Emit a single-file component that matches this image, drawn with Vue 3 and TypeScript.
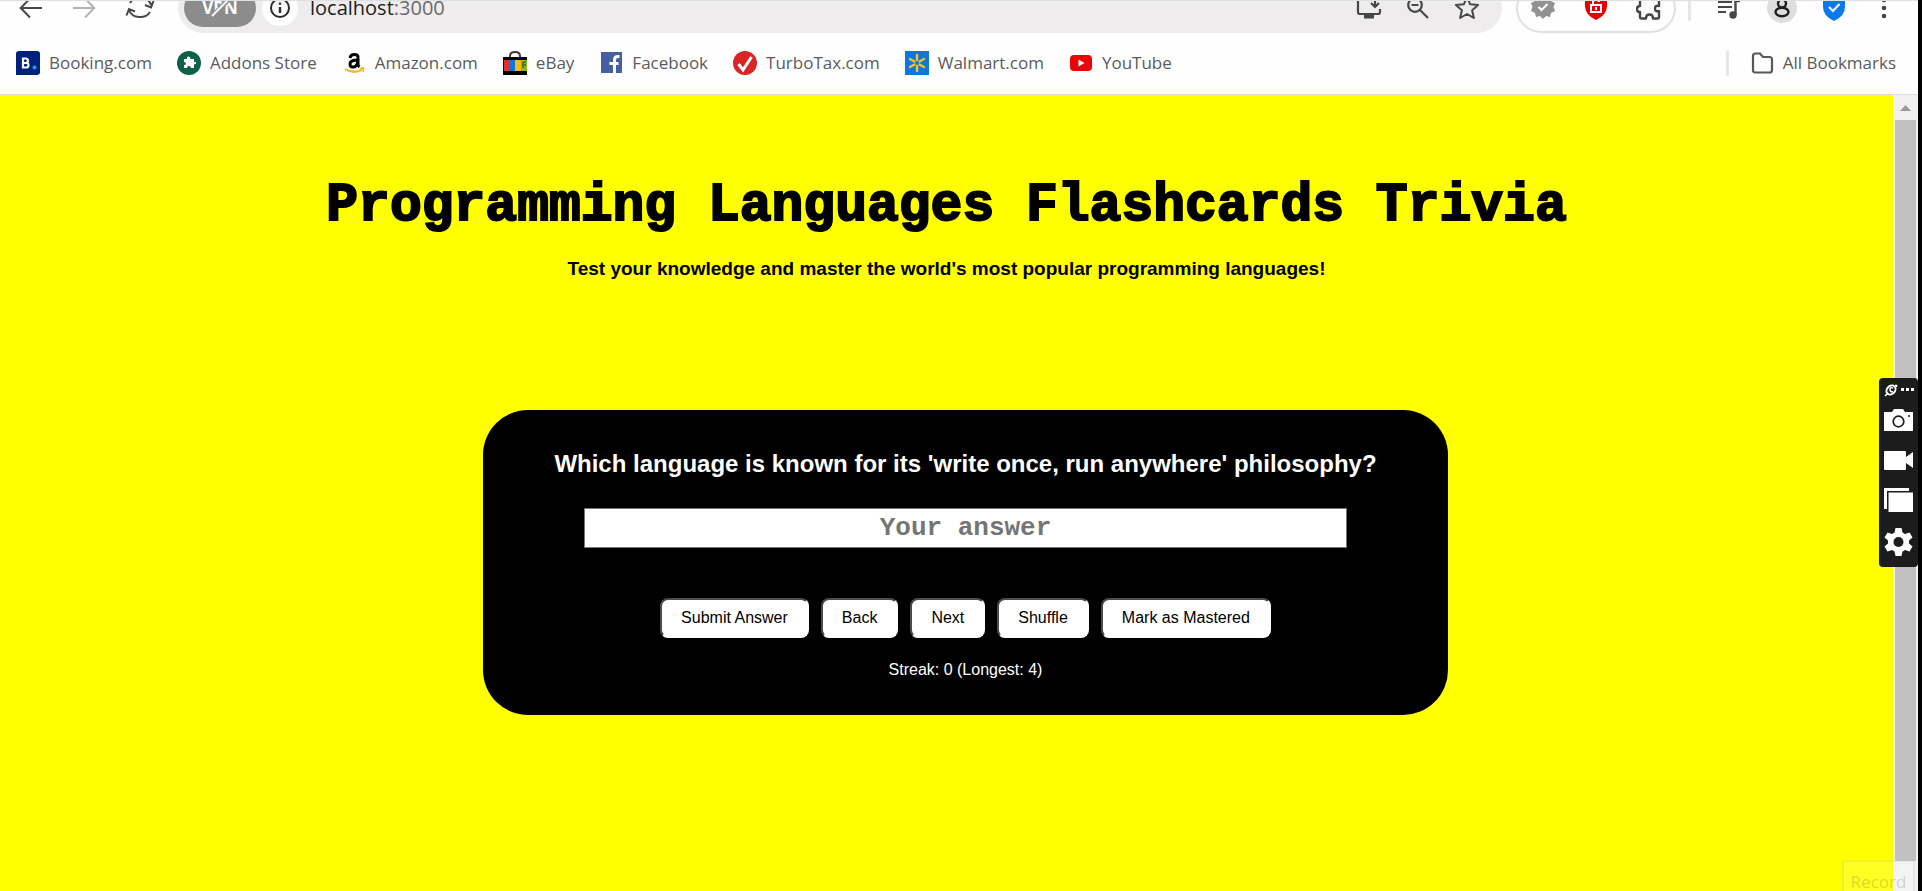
<script setup lang="ts">
import { ref } from 'vue'

interface Bookmark {
  id: string
  label: string
}

const bookmarks: Bookmark[] = [
  { id: 'booking', label: 'Booking.com' },
  { id: 'addons', label: 'Addons Store' },
  { id: 'amazon', label: 'Amazon.com' },
  { id: 'ebay', label: 'eBay' },
  { id: 'facebook', label: 'Facebook' },
  { id: 'turbotax', label: 'TurboTax.com' },
  { id: 'walmart', label: 'Walmart.com' },
  { id: 'youtube', label: 'YouTube' },
]

const actions: string[] = ['Submit Answer', 'Back', 'Next', 'Shuffle', 'Mark as Mastered']
const answer = ref('')
const streak = ref(0)
const longest = ref(4)
</script>

<template>
  <div class="browser">
    <header class="chrome">
      <div class="toolbar">
        <nav class="nav-buttons" aria-label="Navigation">
          <button type="button" aria-label="Back">
            <svg width="24" height="24" viewBox="0 0 24 24" fill="none" stroke="#474747" stroke-width="2"><path d="M23 12H2M11 2.500L1.700 12L11 21.500" /></svg>
          </button>
          <button type="button" aria-label="Forward">
            <svg width="24" height="24" viewBox="0 0 24 24" fill="none" stroke="#b3b3b3" stroke-width="2"><path d="M1 12H22M13 2.500L22.300 12L13 21.500" /></svg>
          </button>
          <button type="button" aria-label="Reload">
            <svg width="30" height="24" viewBox="0 0 30 24" fill="none" stroke="#474747" stroke-width="2"><path d="M4 14a11.500 10 0 0 0 21 2M1.500 19.500L4 13l6 2.500M26 9a11.500 11.500 0 0 0-21-2M28.500 5L26 11.500l-6-2.500" /></svg>
          </button>
        </nav>
        <div class="address">
          <span class="vpn">VPN
            <svg class="slash" width="30" height="24" viewBox="0 0 30 24"><path d="M6 22L24 3" stroke="#8c8c8c" stroke-width="5" /><path d="M7 20L23 4" stroke="#fff" stroke-width="2" /></svg>
          </span>
          <button type="button" class="info" aria-label="Site information">
            <svg width="22" height="22" viewBox="0 0 22 22" fill="none" stroke="#2a2a2a" stroke-width="2"><circle cx="11" cy="11" r="9" /><path d="M11 10v6M11 5.500v2.300" stroke-width="2.400" /></svg>
          </button>
          <span class="url">localhost<span class="port">:3000</span></span>
          <div class="address-icons">
            <svg width="26" height="24" viewBox="0 0 26 24" fill="none" stroke="#474747" stroke-width="2.200"><path d="M13 2H4Q2 2 2 4v12q0 2 2 2h18q2 0 2-2v-3M19 1v9M15 7l4 4 4-4" /><path d="M8 20.500h10" stroke-width="4" /></svg>
            <svg width="24" height="24" viewBox="0 0 24 24" fill="none" stroke="#474747" stroke-width="2.200"><circle cx="9" cy="9" r="6.800" /><path d="M14 14l8 8M5.500 9h7" /></svg>
            <svg width="26" height="26" viewBox="0 0 26 26" fill="none" stroke="#474747" stroke-width="2" stroke-linejoin="round"><path d="M13 2l3.200 7.300 7.900.700-6 5.200 1.800 7.800L13 19l-6.900 4 1.800-7.800-6-5.200 7.900-.700z" /></svg>
          </div>
        </div>
        <div class="extensions">
          <svg width="26" height="26" viewBox="0 0 26 26"><path d="M13 1l3 3 4-1 1 4 4 2-1.500 4 1.500 4-4 2-1 4-4-1-3 3-3-3-4 1-1-4-4-2 1.500-4L1 9l4-2 1-4 4 1z" fill="#929292" /><path d="M8.500 13l3 3 6-6" fill="none" stroke="#fff" stroke-width="2" /></svg>
          <svg width="22" height="26" viewBox="0 0 22 26"><path d="M0 3Q7 3 11 0q4 3 11 3v9q0 9-11 14Q0 21 0 12z" fill="#e60000" /><path d="M6 11h10v7H6zM8 11V8q0-2 3-2t3 2" fill="none" stroke="#fff" stroke-width="2" /><path d="M11 13v3" stroke="#fff" stroke-width="2" /></svg>
          <svg width="26" height="26" viewBox="0 0 26 26" fill="none" stroke="#474747" stroke-width="2.400" stroke-linejoin="round"><path d="M4 5h5q-1-4 3.500-4T16 5h6q1 0 1 1v6q-4-1-4 2.500t4 2.500v6q0 1.500-1.500 1.500H17q0-4-3.500-4T10 24.500H5.500Q4 24.500 4 23v-5q-3 0-3-3t3-3z" /></svg>
        </div>
        <span class="divider"></span>
        <div class="tools">
          <svg width="24" height="24" viewBox="0 0 24 24"><path d="M1 6h14M1 11h14M1 16h8" stroke="#474747" stroke-width="2.200" /><circle cx="16" cy="19" r="3.700" fill="#474747" /><path d="M18.500 19V5H23" fill="none" stroke="#474747" stroke-width="2.400" /></svg>
          <svg width="30" height="30" viewBox="0 0 30 30"><circle cx="15" cy="15" r="15" fill="#dedede" /><circle cx="15" cy="10.500" r="4" fill="none" stroke="#202020" stroke-width="2.400" /><ellipse cx="15" cy="19" rx="6.500" ry="4.200" fill="none" stroke="#202020" stroke-width="2.400" /></svg>
          <svg width="22" height="26" viewBox="0 0 22 26"><path d="M0 3Q7 3 11 0q4 3 11 3v9q0 9-11 14Q0 21 0 12z" fill="#0879ee" /><path d="M6 12l4 4 6.500-7" fill="none" stroke="#fff" stroke-width="2.200" /></svg>
          <svg class="menu" width="6" height="24" viewBox="0 0 6 24" fill="#474747"><circle cx="3" cy="4" r="2.300" /><circle cx="3" cy="12" r="2.300" /><circle cx="3" cy="20" r="2.300" /></svg>
        </div>
      </div>

      <nav class="bookmarks" aria-label="Bookmarks">
        <a v-for="b in bookmarks" :key="b.id" href="#" class="bookmark">
          <svg width="24" height="24" viewBox="0 0 24 24" aria-hidden="true">
            <g v-if="b.id === 'booking'">
              <path d="M3 0h18q3 0 3 3v18q0 3-3 3H0V3q0-3 3-3z" fill="#00217c" />
              <path d="M7 7.500v9h3q2.500 0 2.500-2.300T10 12H7h2.500q2.500 0 2.500-2.200T9.500 7.500z" fill="none" stroke="#fff" stroke-width="2.200" />
              <circle cx="18.500" cy="16.500" r="2" fill="#1d9bf0" />
            </g>
            <g v-else-if="b.id === 'addons'">
              <circle cx="12" cy="12" r="12" fill="#0f6048" />
              <path d="M7 8h3q-.500-2.500 1.500-2.500T13.500 8H17v3q2-1 2 1t-2 1v4h-3q0-2-2-2t-2 2H7v-3q2 0 2-1.500T7 11z" fill="#fff" />
            </g>
            <g v-else-if="b.id === 'amazon'">
              <path d="M8 7q.500-3.500 4.500-3.500T16 7v6q0 2 1.500 3M15.500 9Q8 9 8 13q0 3 3 3 4 0 4.700-5" fill="none" stroke="#000" stroke-width="3" />
              <path d="M3 18q9 5.500 17 .500" fill="none" stroke="#ffb300" stroke-width="2" /><path d="M18 17.500l3.500-.500-.500 4" fill="none" stroke="#ffb300" stroke-width="1.500" />
            </g>
            <g v-else-if="b.id === 'ebay'">
              <path d="M7 7V5q0-4 5-4t5 4v2" fill="none" stroke="#3c3c3c" stroke-width="2" />
              <path d="M0 6h24v18H0z" fill="#000" /><path d="M1 9h5v11H1z" fill="#e1312d" /><path d="M6 9h6v11H6z" fill="#0878e8" /><path d="M12 9h6v11h-6z" fill="#ffb900" /><path d="M18 9h6v11h-6z" fill="#86b817" />
              <path d="M20 11v6M20 14h3M20 11h3" stroke="#3e6b10" stroke-width="1.500" />
            </g>
            <g v-else-if="b.id === 'facebook'">
              <path d="M2 1h21v21H2z" fill="#4460a0" />
              <path d="M15.500 22V9q0-3.500 3.500-3.500h1.500M10.500 12.500h9" fill="none" stroke="#fff" stroke-width="3" />
            </g>
            <g v-else-if="b.id === 'turbotax'">
              <circle cx="12" cy="12" r="12" fill="#d92525" />
              <path d="M5.500 13l4.500 6L18.500 6" fill="none" stroke="#fff" stroke-width="3" />
            </g>
            <g v-else-if="b.id === 'walmart'">
              <path d="M0 0h24v24H0z" fill="#0a78dc" />
              <path d="M12 4v5M12 15v5M5 8l4.500 2.500M14.500 13.500L19 16M19 8l-4.500 2.500M9.500 13.500L5 16" stroke="#ffc220" stroke-width="2.400" stroke-linecap="round" />
            </g>
            <g v-else>
              <rect x="1" y="4" width="22" height="16" rx="4" fill="#ea0606" /><path d="M9.500 8.500l6 3.500-6 3.500z" fill="#fff" />
            </g>
          </svg>
          <span>{{ b.label }}</span>
        </a>
        <span class="divider all-divider"></span>
        <a href="#" class="bookmark">
          <svg width="24" height="24" viewBox="0 0 24 24" fill="none" stroke="#55585d" stroke-width="2.200"><path d="M3 5q0-2.500 2.500-2.500H10L13 6h6.500Q22 6 22 8.500v11q0 2-2.500 2h-14Q3 21.500 3 19.500z" /></svg>
          <span>All Bookmarks</span>
        </a>
      </nav>
    </header>

    <div class="viewport">
      <main class="page">
        <h1>Programming Languages Flashcards Trivia</h1>
        <p class="tagline">Test your knowledge and master the world's most popular programming languages!</p>
        <section class="card">
          <h2><label for="answer">Which language is known for its 'write once, run anywhere' philosophy?</label></h2>
          <input id="answer" v-model="answer" type="text" placeholder="Your answer" />
          <div class="actions">
            <button v-for="a in actions" :key="a" type="button">{{ a }}</button>
          </div>
          <p class="streak">Streak: {{ streak }} (Longest: {{ longest }})</p>
        </section>
      </main>
      <div class="scrollbar" aria-hidden="true">
        <svg width="25" height="25" viewBox="0 0 25 25"><path d="M7 16l5.500-6 5.500 6z" fill="#9b9b9b" /></svg>
        <span class="thumb"></span>
      </div>
    </div>

    <aside class="recorder" aria-label="Screen recorder">
      <div class="recorder-top">
        <svg width="14" height="14" viewBox="0 0 14 14" fill="none" stroke="#fff" stroke-width="1.500"><ellipse cx="7" cy="7" rx="5" ry="4" transform="rotate(-45 7 7)" stroke-width="2" /><path d="M9 5q-3-1-3 1.500T9 9M1 13l3-3M11 2.500h1.500V4" /></svg>
        <svg width="13" height="4" viewBox="0 0 13 4" fill="#fff"><path d="M0 0h3v3H0zM5 0h3v3H5zM10 0h3v3h-3z" /></svg>
      </div>
      <button type="button" aria-label="Take screenshot">
        <svg width="30" height="24" viewBox="0 0 30 24"><path d="M0 4h8l2-3h9l2 3h8v19H0z" fill="#fff" /><circle cx="14.500" cy="13.500" r="5.300" fill="none" stroke="#1c1c1c" stroke-width="1.700" /><circle cx="25" cy="8" r="1" fill="#1c1c1c" /></svg>
      </button>
      <button type="button" aria-label="Record video">
        <svg width="30" height="24" viewBox="0 0 30 24"><path d="M1 3h20q1 0 1 1v5l7-5v16l-7-5v6q0 1-1 1H1q-1 0-1-1V4q0-1 1-1z" fill="#fff" /></svg>
      </button>
      <button type="button" aria-label="Gallery">
        <svg width="30" height="24" viewBox="0 0 30 24"><path d="M0 0h25v3H3v18H0z" fill="#fff" /><path d="M4.500 4.500H29V24H4.500z" fill="#fff" /></svg>
      </button>
      <button type="button" aria-label="Settings">
        <svg width="30" height="30" viewBox="0 0 30 30"><path d="M11.500 0h6l1 4.500 2.500 1.500 4.500-1.500 3 5-3.500 3v3l3.500 3-3 5L21 22l-2.500 1.500-1 4.500h-6l-1-4.500L8 22l-4.500 1.500-3-5 3.500-3v-3l-3.500-3 3-5L8 6l2.500-1.500z" fill="#fff" /><circle cx="14.500" cy="14" r="5" fill="#1c1c1c" /></svg>
      </button>
    </aside>
    <div class="record-tip">Record</div>
  </div>
</template>

<style>
html,
body {
  height: 100%;
  overflow: hidden;
}
</style>

<style scoped>
* {
  box-sizing: border-box;
}

.browser {
  position: relative;
  display: flex;
  flex-direction: column;
  height: 100vh;
  overflow: hidden;
  border-right: 4px solid #000;
  font-family: "Liberation Sans", Arial, sans-serif;
}

button {
  margin: 0;
  padding: 0;
  border: 0;
  background: none;
  font: inherit;
}

svg {
  display: block;
  flex: none;
}

/* Browser chrome */
.chrome {
  flex: none;
  overflow: hidden;
  border-top: 1px solid #dde0e4;
  border-bottom: 1px solid #dcdcdc;
  background: #fefefe;
  font-family: "Open Sans", "Noto Sans", sans-serif;
}

.toolbar {
  display: flex;
  align-items: center;
  height: 50px;
  margin-top: -18px;
  padding: 0 31px 0 19px;
}

.nav-buttons {
  display: flex;
  align-items: center;
  gap: 29px;
  width: 159px;
}

.address {
  display: flex;
  flex: 1;
  align-items: center;
  height: 50px;
  padding: 0 22px 0 6px;
  border-radius: 25px;
  background: #eeecec;
}

.vpn {
  position: relative;
  display: grid;
  place-items: center;
  width: 72px;
  height: 38px;
  border-radius: 19px;
  background: #8c8c8c;
  color: #fff;
  font-size: 17px;
  font-weight: 700;
  line-height: 20px;
}

.slash {
  position: absolute;
  top: 7px;
  left: 21px;
}

.info {
  display: grid;
  place-items: center;
  width: 36px;
  height: 36px;
  margin: 0 12px 0 6px;
  border-radius: 50%;
  background: #fff;
}

.url {
  color: #202124;
  font-size: 20px;
  line-height: 24px;
}

.port {
  color: #6a6a6a;
}

.address-icons {
  display: flex;
  align-items: center;
  gap: 24px;
  margin-left: auto;
}

.extensions {
  display: flex;
  align-items: center;
  gap: 29px;
  height: 50px;
  margin-left: 14px;
  padding: 0 12px 2px 12px;
  border: 2px solid #e0e0e0;
  border-radius: 25px;
}

.divider {
  width: 3px;
  height: 26px;
  margin: 0 26px 0 12px;
  border-radius: 2px;
  background: #e6e6e6;
}

.tools {
  display: flex;
  align-items: center;
  gap: 26px;
}

.menu {
  margin-left: 10px;
}

.bookmarks {
  display: flex;
  align-items: center;
  gap: 25px;
  height: 61px;
  padding: 0 22px 1px 16px;
}

.bookmark {
  display: flex;
  align-items: center;
  gap: 9px;
  color: #5b5b5b;
  font-size: 17px;
  line-height: 24px;
  text-decoration: none;
  white-space: nowrap;
}

.all-divider {
  margin: 0 -4px 0 auto;
}

/* Page viewport */
.viewport {
  display: flex;
  flex: 1;
  min-height: 0;
}

.page {
  flex: 1;
  background: #ff0;
  color: #000;
  text-align: center;
}

h1 {
  margin: 79px 0 0;
  font-family: "Liberation Mono", "Courier New", monospace;
  font-size: 53px;
  font-weight: 700;
  line-height: 64px;
  -webkit-text-stroke: 2px #000;
}

.tagline {
  margin: 19px 0 0;
  font-size: 19px;
  font-weight: 700;
  line-height: 24px;
}

.card {
  position: relative;
  left: 19px;
  width: 51%;
  margin: 129px auto 0;
  padding: 38px 0 33px;
  border-radius: 45px;
  background: #000;
  color: #fff;
}

h2 {
  margin: 0;
  font-size: 24px;
  font-weight: 700;
  line-height: 32px;
}

input {
  display: block;
  width: 79%;
  height: 40px;
  margin: 28px auto 0;
  padding: 0;
  border: 1px solid #767676;
  border-radius: 0;
  background: #fff;
  font-family: "Liberation Mono", "Courier New", monospace;
  font-size: 26px;
  font-weight: 700;
  text-align: center;
}

input::placeholder {
  color: #757575;
  opacity: 1;
}

.actions {
  display: flex;
  justify-content: center;
  gap: 12px;
  margin-top: 50px;
}

.actions button {
  height: 40px;
  padding: 0 19px;
  border: 2px solid;
  border-color: #4c4c4c #fff #fff #4c4c4c;
  border-radius: 8px;
  background: #fff;
  color: #000;
  font-size: 16px;
}

.streak {
  margin: 20px 0 0;
  font-size: 16px;
  line-height: 24px;
}

.scrollbar {
  display: flex;
  flex-direction: column;
  align-items: center;
  width: 25px;
  padding-bottom: 30px;
  background: #f1f1f1;
}

.thumb {
  flex: 1;
  width: 21px;
  background: #c1c1c1;
}

/* Floating overlays */
.recorder {
  position: absolute;
  top: 378px;
  right: 0;
  display: flex;
  flex-direction: column;
  align-items: center;
  gap: 16px;
  width: 39px;
  padding: 5px 4px 9px;
  border-radius: 4px;
  background: #1c1c1c;
}

.recorder-top {
  display: flex;
  align-items: center;
  gap: 3px;
  margin-bottom: -5px;
}

.record-tip {
  position: absolute;
  right: 3px;
  bottom: -6px;
  width: 73px;
  height: 37px;
  padding-top: 8px;
  border: 2px solid rgba(120, 120, 80, 0.1);
  background: rgba(255, 255, 255, 0.14);
  color: rgba(90, 90, 60, 0.24);
  font-family: "Open Sans", sans-serif;
  font-size: 17px;
  line-height: 24px;
  text-align: center;
}
</style>
